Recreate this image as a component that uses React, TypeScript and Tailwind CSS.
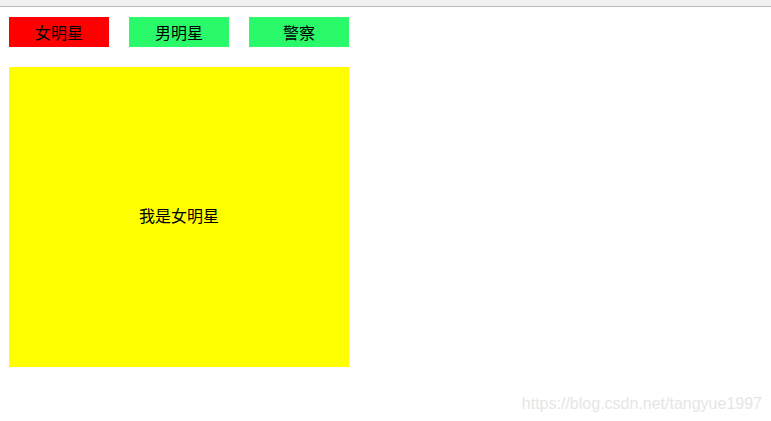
import { useState } from "react";

const tabs = [
  { name: "女明星", text: "我是女明星" },
  { name: "男明星", text: "我是男明星" },
  { name: "警察", text: "我是警察" },
];

export default function App() {
  const [active, setActive] = useState(0);

  return (
    <div
      className="relative h-[421px] w-[771px] overflow-hidden bg-white text-black"
      style={{ fontFamily: '"Liberation Sans", "Noto Sans CJK SC", sans-serif' }}
    >
      <div className="h-[6px] border-b border-[#bababa] bg-[#f1f1f1] box-content" />
      <div className="pl-[9px] pt-[10px]">
        <div className="flex gap-5">
          {tabs.map((t, i) => (
            <button
              key={t.name}
              onClick={() => setActive(i)}
              className={
                "flex h-[30px] w-[100px] items-center justify-center pt-[3px] text-base leading-none " +
                (i === active ? "bg-[#ff0000]" : "bg-[#2afa6a]")
              }
            >
              {t.name}
            </button>
          ))}
        </div>
        <div className="mt-5 flex h-[300px] w-[340px] items-center justify-center bg-[#ffff00] text-base">
          {tabs[active].text}
        </div>
      </div>
      <div className="absolute right-[9px] top-[392px] text-[16px] text-[#e6e6e6]">
        https://blog.csdn.net/tangyue1997
      </div>
    </div>
  );
}
